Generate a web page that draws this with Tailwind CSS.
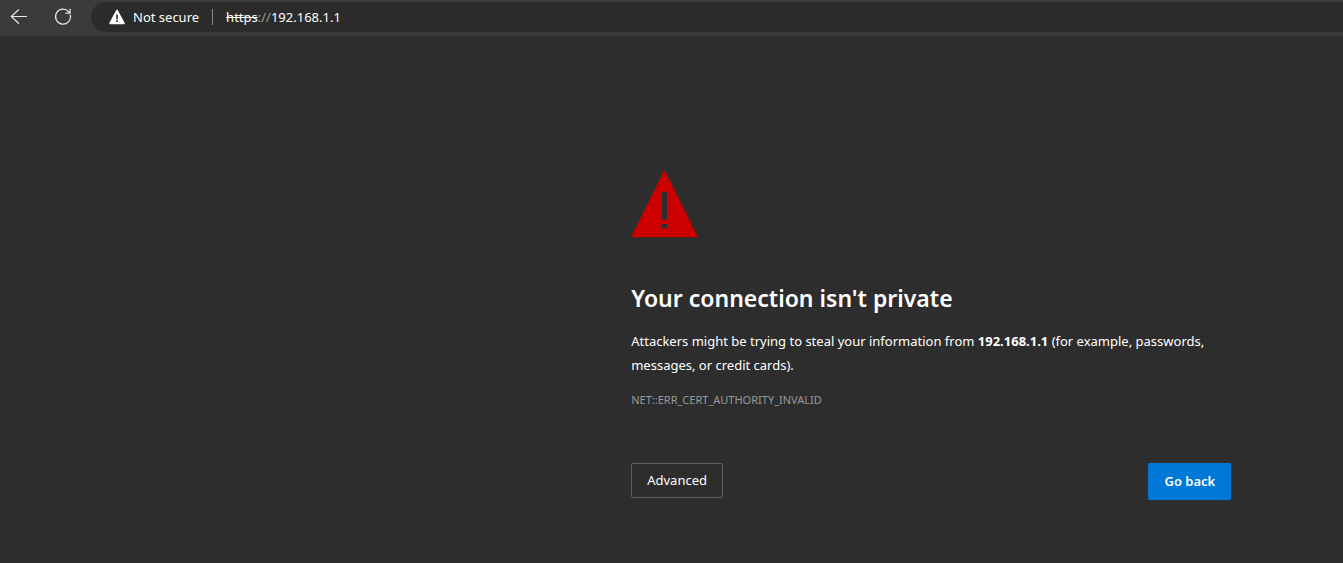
<!DOCTYPE html>
<html lang="en">
<head>
<meta charset="utf-8">
<meta name="viewport" content="width=device-width, initial-scale=1">
<title>Privacy error</title>
<script src="https://cdn.jsdelivr.net/npm/@tailwindcss/browser@4"></script>
</head>
<body class="min-h-screen bg-[#2d2d2d] text-white font-['Segoe_UI','Noto_Sans',sans-serif] text-[13px]">
<header class="flex h-9 items-start bg-[#3b3b3b] pt-0.5">
  <nav class="flex h-[30px] w-[91px] shrink-0 items-center gap-6 pl-[9px]" aria-label="Navigation">
    <button type="button" aria-label="Back" class="size-5">
      <svg viewBox="0 0 20 20" class="size-5" fill="none" stroke="#e8e8e8" stroke-width="1.2" stroke-linecap="round" stroke-linejoin="round"><path d="M9.5 2.8 2.3 9.5l7.2 6.8M2.3 9.5h15.2"/></svg>
    </button>
    <button type="button" aria-label="Refresh" class="size-5">
      <svg viewBox="0 0 20 20" class="size-5" fill="none" stroke="#e8e8e8" stroke-width="1.2" stroke-linecap="round" stroke-linejoin="round"><path d="M17.4 8.2A7.5 7.5 0 1 1 15.6 4.6L16.9 6M17.1 2v4.2h-4.2"/></svg>
    </button>
  </nav>
  <div class="flex h-[30px] min-w-0 flex-1 items-center rounded-l-full bg-[#2b2b2b] pl-[18px]">
    <button type="button" class="flex items-center gap-2 whitespace-nowrap">
      <svg viewBox="0 0 16 16" class="size-4" aria-hidden="true"><path d="M8 1.4 15 14.4H1Z" fill="#fff" stroke="#fff" stroke-width="1.6" stroke-linejoin="round"/><path d="M7.2 5.5h1.6v4.7H7.2zM7.2 11.3h1.6V13H7.2z" fill="#2b2b2b"/></svg>
      <span class="pt-px">Not secure</span>
    </button>
    <span class="ml-[13px] h-4 w-px bg-[#8a8a8a]"></span>
    <a href="#" class="ml-[13px] pt-px whitespace-nowrap"><span class="line-through">https</span><span class="text-[#9a9a9a]">://</span>192.168.1.1</a>
  </div>
</header>
<main class="ml-[47%] max-w-[600px] pt-[134px]">
  <svg viewBox="0 0 68 68" class="block size-[68px]" aria-hidden="true"><path d="M33.5 0 67 67.3H0Z" fill="#c00"/><path d="M31 22h5v27.500h-5zM31 54h5v4.500h-5z" fill="#2d2d2d"/></svg>
  <h1 class="mt-11 text-[23px] leading-8 font-semibold">Your connection isn't private</h1>
  <p class="mt-[15px] leading-6">Attackers might be trying to steal your information from <strong>192.168.1.1</strong> (for example, passwords, messages, or credit cards).</p>
  <p class="mt-[11px] text-[11px] leading-6 text-[#9a9a9a]">NET::ERR_CERT_AUTHORITY_INVALID</p>
  <div class="mt-[51px] flex items-start justify-between">
    <button type="button" class="h-[35px] rounded-xs border border-[#5f5f5f] px-[15px]">Advanced</button>
    <button type="button" class="h-[37px] rounded-xs bg-[#0078d7] px-4 font-semibold">Go back</button>
  </div>
</main>
</body>
</html>
